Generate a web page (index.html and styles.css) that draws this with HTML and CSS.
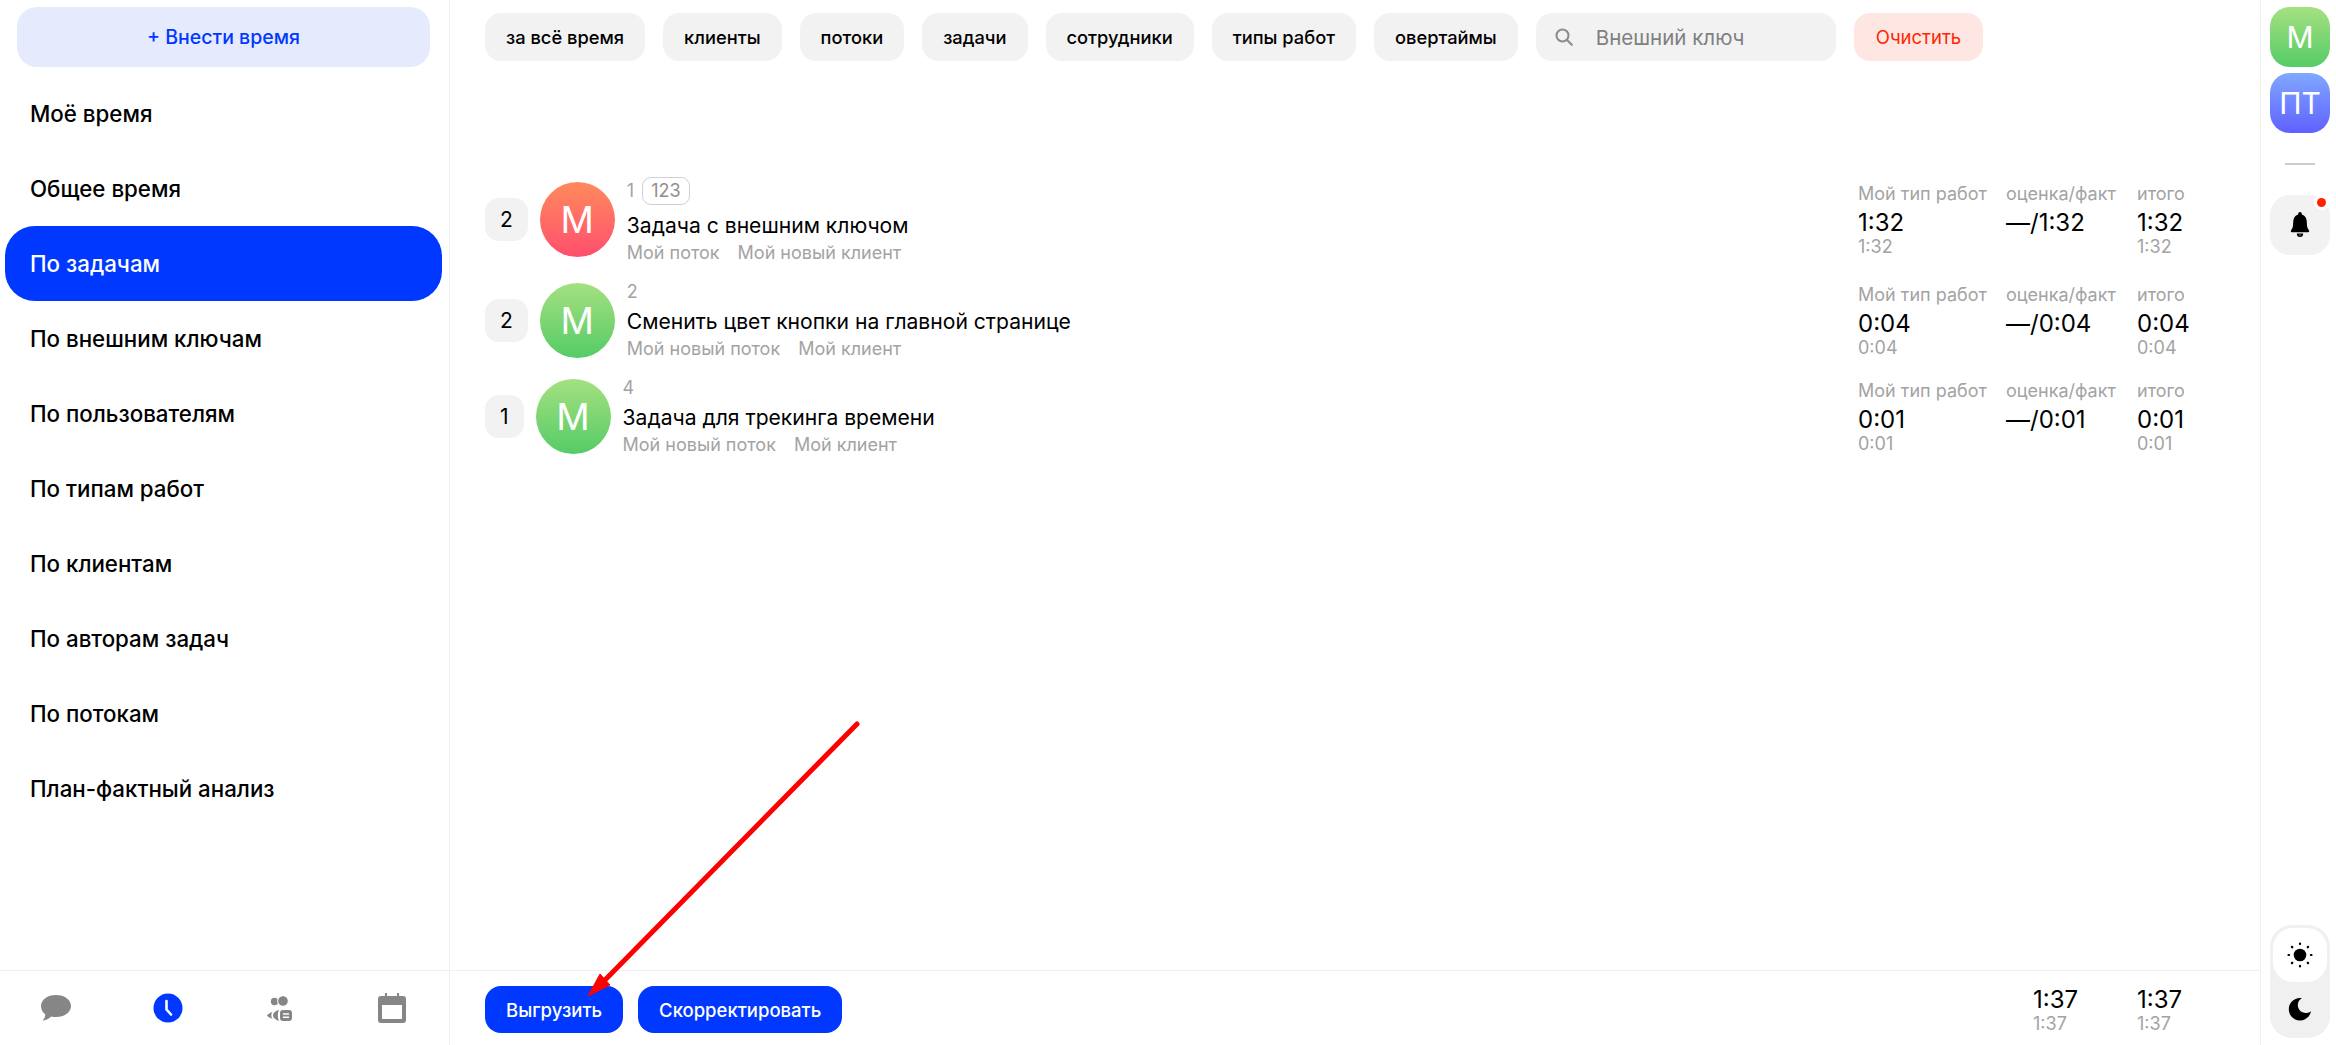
FILE: index.html
```html
<!DOCTYPE html>
<html lang="ru">
<head>
<meta charset="utf-8">
<title>По задачам</title>
<link rel="stylesheet" href="styles.css">
</head>
<body>
<div class="app">
  <aside class="sidebar">
    <div class="add-wrap"><button class="add-btn">+ Внести время</button></div>
    <nav class="nav">
      <a class="nav-item">Моё время</a>
      <a class="nav-item">Общее время</a>
      <a class="nav-item active">По задачам</a>
      <a class="nav-item">По внешним ключам</a>
      <a class="nav-item">По пользователям</a>
      <a class="nav-item">По типам работ</a>
      <a class="nav-item">По клиентам</a>
      <a class="nav-item">По авторам задач</a>
      <a class="nav-item">По потокам</a>
      <a class="nav-item">План-фактный анализ</a>
    </nav>
    <div class="side-foot">
      <svg class="ic" width="32" height="28" viewBox="0 0 32 28"><path fill="#868686" d="M16 1C24.500 1 31 5.800 31 12S24.500 23 16 23c-1.800 0-3.400-.2-4.900-.6C9.600 24.300 7 26 2.500 26.500 4.300 25 5.200 23 5.300 20.300 2.700 18.300 1 15.400 1 12 1 5.800 7.500 1 16 1Z"/></svg>
      <svg class="ic" width="30" height="30" viewBox="0 0 30 30"><circle cx="15" cy="15" r="14.500" fill="#0038ff"/><path d="M13.500 8v8.500l4.500 5" fill="none" stroke="#fff" stroke-width="2.600" stroke-linecap="round" stroke-linejoin="round"/></svg>
      <svg class="ic" width="26" height="28" viewBox="0 0 26 28"><g fill="#868686"><circle cx="8.500" cy="7.500" r="3.700"/><circle cx="17" cy="7" r="5.300" stroke="#fff" stroke-width="1"/><path d="M6.500 18c-2.200.6-4.400 2-5.500 3.400 1.100 1.400 3.300 2.800 5.500 3.400-.8-1-1.200-2.100-1.200-3.400s.4-2.400 1.200-3.400Z"/><path d="M13 16c-3 .6-6 2.800-6 5.400s3 4.800 6 5.400c-.8-1.600-1.200-3.400-1.200-5.400s.4-3.800 1.200-5.400Z"/><path fill-rule="evenodd" d="M17 16h6a3 3 0 0 1 3 3v5a3 3 0 0 1-3 3h-6a3 3 0 0 1-3-3v-5a3 3 0 0 1 3-3Zm0 3.200v1.500h6v-1.500Zm0 3.200v1.500h6v-1.500Z"/></g></svg>
      <svg class="ic" width="28" height="30" viewBox="0 0 28 30"><path fill="#868686" fill-rule="evenodd" d="M7 0h2v3h10V0h2v3h4a3 3 0 0 1 3 3v21a3 3 0 0 1-3 3H3a3 3 0 0 1-3-3V6a3 3 0 0 1 3-3h4ZM4 12v14h20V12Z"/></svg>
    </div>
  </aside>

  <main class="main">
    <header class="filters">
      <button class="chip">за всё время</button>
      <button class="chip">клиенты</button>
      <button class="chip">потоки</button>
      <button class="chip">задачи</button>
      <button class="chip">сотрудники</button>
      <button class="chip">типы работ</button>
      <button class="chip">овертаймы</button>
      <div class="search">
        <svg width="18" height="18" viewBox="0 0 18 18"><circle cx="7.500" cy="7.500" r="6" fill="none" stroke="#8c8c8c" stroke-width="2.100"/><path d="M12 12l4.800 4.800" stroke="#8c8c8c" stroke-width="2.100" stroke-linecap="round"/></svg>
        <span class="search-text">Внешний ключ</span>
      </div>
      <button class="chip clear">Очистить</button>
    </header>

    <section class="list">
      <article class="row">
        <div class="lead">
          <span class="count">2</span>
          <span class="avatar red">М</span>
        </div>
        <div class="task">
          <div class="task-id">1 <span class="key">123</span></div>
          <div class="task-title">Задача с внешним ключом</div>
          <div class="task-sub"><span>Мой поток</span><span>Мой новый клиент</span></div>
        </div>
        <div class="stats">
          <div class="stat"><div class="lbl">Мой тип работ</div><div class="val">1:32</div><div class="sub">1:32</div></div>
          <div class="stat"><div class="lbl">оценка/факт</div><div class="val">—/1:32</div></div>
          <div class="stat"><div class="lbl">итого</div><div class="val">1:32</div><div class="sub">1:32</div></div>
        </div>
      </article>
      <article class="row">
        <div class="lead">
          <span class="count">2</span>
          <span class="avatar green">М</span>
        </div>
        <div class="task">
          <div class="task-id">2</div>
          <div class="task-title">Сменить цвет кнопки на главной странице</div>
          <div class="task-sub"><span>Мой новый поток</span><span>Мой клиент</span></div>
        </div>
        <div class="stats">
          <div class="stat"><div class="lbl">Мой тип работ</div><div class="val">0:04</div><div class="sub">0:04</div></div>
          <div class="stat"><div class="lbl">оценка/факт</div><div class="val">—/0:04</div></div>
          <div class="stat"><div class="lbl">итого</div><div class="val">0:04</div><div class="sub">0:04</div></div>
        </div>
      </article>
      <article class="row">
        <div class="lead">
          <span class="count">1</span>
          <span class="avatar green">М</span>
        </div>
        <div class="task">
          <div class="task-id">4</div>
          <div class="task-title">Задача для трекинга времени</div>
          <div class="task-sub"><span>Мой новый поток</span><span>Мой клиент</span></div>
        </div>
        <div class="stats">
          <div class="stat"><div class="lbl">Мой тип работ</div><div class="val">0:01</div><div class="sub">0:01</div></div>
          <div class="stat"><div class="lbl">оценка/факт</div><div class="val">—/0:01</div></div>
          <div class="stat"><div class="lbl">итого</div><div class="val">0:01</div><div class="sub">0:01</div></div>
        </div>
      </article>
    </section>

    <footer class="main-foot">
      <button class="primary">Выгрузить</button>
      <button class="primary">Скорректировать</button>
      <div class="totals">
        <div class="total"><div class="val">1:37</div><div class="sub">1:37</div></div>
        <div class="total"><div class="val">1:37</div><div class="sub">1:37</div></div>
      </div>
    </footer>
  </main>

  <aside class="rail">
    <div class="tile green big">М</div>
    <div class="tile violet big">ПТ</div>
    <div class="rail-line"></div>
    <div class="tile bell">
      <svg width="20" height="26" viewBox="0 0 22 26" preserveAspectRatio="none"><path d="M11 0c1.200 0 2 .8 2 2v.6c3.600.9 5.500 3.900 5.500 7.700 0 4.200.7 6.200 2.300 8 .7.800.2 2-.9 2H2.100c-1.100 0-1.600-1.200-.9-2 1.600-1.800 2.300-3.800 2.300-8 0-3.800 1.900-6.800 5.500-7.700V2c0-1.200.8-2 2-2Z"/><path d="M7.500 21.500h7a3.500 3.500 0 0 1-7 0Zm2.200 1.300a1.500 1.500 0 0 0 2.600 0Z" fill-rule="evenodd"/></svg>
      <span class="dot"></span>
    </div>
    <div class="theme">
      <div class="theme-on">
        <svg width="26" height="26" viewBox="0 0 26 26"><circle cx="13" cy="13" r="6.300"/><g stroke="#000" stroke-width="2.200" stroke-linecap="round"><path d="M13 1.500v.6M13 23.900v.6M1.500 13h.6M23.900 13h.6M4.900 4.900l.4.4M20.700 20.700l.4.4M4.900 21.100l.4-.4M20.700 5.300l.4-.4"/></g></svg>
      </div>
      <div class="theme-off">
        <svg width="24" height="24" viewBox="0 0 24 24"><path d="M12 1c.7 0 1.300 0 1.800.2-2.500 1.400-4 4-4 6.800 0 4.400 3.500 8 8 8 1.900 0 3.900-.7 5.200-1.800C22 19.600 17.500 23.500 12 23.500 5.700 23.500.8 18.500.8 12.200.8 6 5.700 1 12 1Z"/></svg>
      </div>
    </div>
  </aside>
</div>

<svg class="arrow" width="300" height="290" viewBox="0 0 300 290"><path d="M287 9 35 265" stroke="#fe0000" stroke-width="5" stroke-linecap="round" fill="none"/><path d="M18 281 30 259 40 270Z" fill="#fe0000" stroke="#fe0000" stroke-width="1"/></svg>
</body>
</html>
```

FILE: styles.css
```css
* { box-sizing: border-box; }
html, body { margin: 0; height: 100%; background: #fff; }
body { font-family: Inter, "Liberation Sans", sans-serif; color: #000; overflow: hidden; position: relative; }
button { font-family: inherit; border: 0; cursor: pointer; }

.app { display: flex; height: 1045px; }

.sidebar { width: 450px; flex: none; display: flex; flex-direction: column; border-right: 1px solid #f0f0f0; }
.add-wrap { padding: 7px 19px 0 17px; }
.add-btn { width: 100%; height: 60px; border-radius: 20px; background: #e5ebfd; color: #0038ff; font-size: 19.500px; font-weight: 500; }
.nav { flex: 1; display: flex; flex-direction: column; padding: 8.500px 7px 0 5px; }
.nav-item { height: 75px; padding-left: 25px; display: flex; align-items: center; font-size: 22.300px; font-weight: 500; border-radius: 30px; flex: none; }
.nav-item.active { background: #0038ff; color: #fff; }
.side-foot { height: 75px; border-top: 1px solid #f0f0f0; display: grid; grid-template-columns: 111px 113px 109px 116px; align-items: center; justify-items: center; }
.side-foot .ic:last-child { margin-left: 2px; }

.main { flex: 1; min-width: 0; display: flex; flex-direction: column; }
.filters { display: flex; gap: 18px; padding: 13px 0 0 35px; height: 177px; align-items: flex-start; flex: none; }
.chip { height: 48px; padding: 0 21px; background: #f2f2f2; border-radius: 16px; font-size: 18.300px; font-weight: 500; color: #000; white-space: nowrap; }
.chip.clear { background: #fee7e3; color: #ff2600; font-weight: 400; font-size: 18.500px; padding: 0 22px; }
.search { width: 300px; height: 48px; background: #f2f2f2; border-radius: 16px; display: flex; align-items: center; padding-left: 19px; gap: 23px; }
.search-text { font-size: 20.500px; color: #808080; }

.list { flex: 1; display: flex; flex-direction: column; gap: 18px; padding: 0 0 0 35px; }
.row { display: flex; align-items: center; }
.lead { display: flex; align-items: center; gap: 12px; margin-bottom: 3px; }
.count { height: 43px; padding: 0 15px; border-radius: 14px; background: #f2f2f2; display: flex; align-items: center; font-size: 21px; }
.avatar { width: 75px; height: 75px; border-radius: 50%; color: #fff; display: flex; align-items: center; justify-content: center; font-size: 37px; }
.red { background: linear-gradient(#ff8a5c, #ff4f6e); }
.green { background: linear-gradient(#a5e080, #55cc66); }
.violet { background: linear-gradient(#80a8ff, #6060ff); }

.task { margin-left: 12px; flex: 1; min-width: 0; }
.task-id { min-height: 18px; margin-bottom: 6px; font-size: 18px; line-height: 18px; color: #a3a3a3; display: flex; align-items: center; gap: 8px; }
.key { height: 28px; padding: 0 8px; border: 1px solid #d0d0d0; border-radius: 9px; display: flex; align-items: center; color: #8e8e8e; }
.task-title { font-size: 21.100px; line-height: 30px; }
.task-sub { font-size: 18px; line-height: 24px; color: #a3a3a3; display: flex; gap: 18px; }

.stats { width: 402px; flex: none; display: grid; grid-template-columns: 148px 131px 1fr; margin-bottom: 4px; }
.lbl { font-size: 18px; line-height: 24px; color: #a3a3a3; }
.val { font-size: 24px; line-height: 29px; margin-top: 2px; }
.sub { font-size: 18px; line-height: 19px; color: #a3a3a3; }

.main-foot { height: 75px; flex: none; border-top: 1px solid #f0f0f0; display: flex; align-items: flex-start; gap: 15px; padding: 15px 0 0 35px; }
.primary { height: 47px; padding: 0 21px; border-radius: 16px; background: #0038ff; color: #fff; font-size: 18.500px; font-weight: 500; }
.totals { margin-left: auto; display: grid; grid-template-columns: 104px 123px; }
.total .val { margin-top: -1px; }

.rail { width: 76px; flex: none; border-left: 1px solid #f0f0f0; display: flex; flex-direction: column; align-items: center; padding: 7px 6px 7px 9px; }
.tile { width: 60px; height: 60px; border-radius: 20px; display: flex; align-items: center; justify-content: center; flex: none; position: relative; }
.big { color: #fff; font-size: 30px; margin-bottom: 6px; }
.rail-line { width: 30px; height: 2px; background: #ccc; margin: 24px 0 30px; flex: none; }
.bell { background: #f2f2f2; }
.dot { position: absolute; top: 3px; right: 4px; width: 9px; height: 9px; border-radius: 50%; background: #ff2200; box-shadow: 0 0 0 3px #fff; }
.theme { margin-top: auto; width: 60px; height: 113px; border-radius: 22px; background: #f0f0f0; padding: 3px; flex: none; }
.theme-on { height: 54px; background: #fff; border-radius: 20px; display: flex; align-items: center; justify-content: center; }
.theme-off { height: 54px; display: flex; align-items: center; justify-content: center; }

.arrow { position: absolute; left: 570px; top: 715px; pointer-events: none; }
```
